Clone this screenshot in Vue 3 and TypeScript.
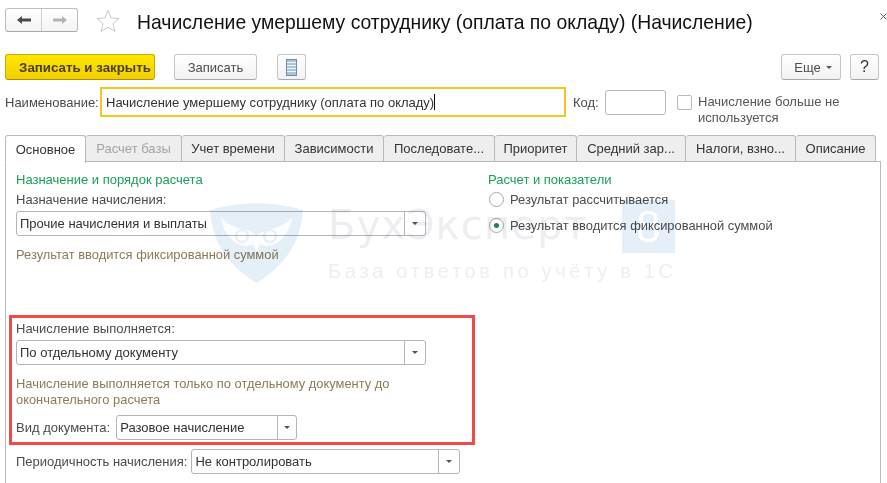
<script setup lang="ts">
const tabs: { label: string; width: number; state?: string }[] = [
  { label: 'Основное', width: 81, state: 'active' },
  { label: 'Расчет базы', width: 96, state: 'disabled' },
  { label: 'Учет времени', width: 103 },
  { label: 'Зависимости', width: 99 },
  { label: 'Последовате...', width: 111 },
  { label: 'Приоритет', width: 82 },
  { label: 'Средний зар...', width: 109 },
  { label: 'Налоги, взно...', width: 110 },
  { label: 'Описание', width: 80 }
]
</script>

<template>
  <div class="page">
    <header class="head">
      <div class="nav">
        <button class="nav-btn">
          <svg width="16" height="12" viewBox="0 0 16 12"><path d="M1 6l5-4v2.600h9v2.800H6V10z" fill="#4a4a4a" /></svg>
        </button>
        <button class="nav-btn">
          <svg width="16" height="12" viewBox="0 0 16 12"><path d="M15 6l-5-4v2.600H1v2.800h9V10z" fill="#b4b4b4" /></svg>
        </button>
      </div>
      <svg class="star" width="24" height="23" viewBox="0 0 24 23"><path d="M12 1.500l3.100 7.400 8 .6-6.100 5.200 1.900 7.800L12 18.300l-6.900 4.200L7 14.700.9 9.500l8-.6z" fill="#fff" stroke="#c9c9c9" /></svg>
      <h1 class="title">Начисление умершему сотруднику (оплата по окладу) (Начисление)</h1>
      <svg class="close" width="7" height="7" viewBox="0 0 7 7"><path d="M.5.5l6 6M6.500.5l-6 6" stroke="#666" stroke-width="1" /></svg>
    </header>

    <div class="toolbar">
      <button class="btn primary">Записать и закрыть</button>
      <button class="btn save">Записать</button>
      <button class="btn icon-btn">
        <svg width="11" height="17" viewBox="0 0 11 17">
          <rect x=".5" y=".5" width="10" height="16" fill="#a9c3da" stroke="#6f8da6" />
          <path d="M1 3.500h9M1 6.500h9M1 9.500h9M1 12.500h9" stroke="#eef4f9" stroke-width="1" />
        </svg>
      </button>
      <div class="spacer"></div>
      <button class="btn more">Еще <i class="caret"></i></button>
      <button class="btn help">?</button>
    </div>

    <div class="name-row">
      <label class="lbl name-lbl">Наименование:</label>
      <div class="name-input">Начисление умершему сотруднику (оплата по окладу)<i class="cursor"></i></div>
      <label class="lbl code-lbl">Код:</label>
      <div class="code-input"></div>
      <span class="check"></span>
      <span class="check-text">Начисление больше не используется</span>
    </div>

    <nav class="tabs">
      <div
        v-for="t in tabs"
        :key="t.label"
        class="tab"
        :class="t.state"
        :style="{ width: t.width + 'px' }"
      >{{ t.label }}</div>
    </nav>

    <section class="pane">
      <div class="top-cols">
        <div class="left">
          <div class="group-title">Назначение и порядок расчета</div>
          <div class="lbl field-lbl">Назначение начисления:</div>
          <div class="select wide"><span class="val">Прочие начисления и выплаты</span><span class="arrow"><i class="caret"></i></span></div>
          <div class="hint first-hint">Результат вводится фиксированной суммой</div>
        </div>
        <div class="right">
          <div class="group-title">Расчет и показатели</div>
          <div class="radio-row first-radio"><span class="radio"></span>Результат рассчитывается</div>
          <div class="radio-row"><span class="radio on"></span>Результат вводится фиксированной суммой</div>
        </div>
      </div>

      <div class="highlight">
        <div class="lbl field-lbl">Начисление выполняется:</div>
        <div class="select wide"><span class="val">По отдельному документу</span><span class="arrow"><i class="caret"></i></span></div>
        <div class="hint second-hint">Начисление выполняется только по отдельному документу до окончательного расчета</div>
        <div class="inline-field">
          <span class="lbl">Вид документа:</span>
          <div class="select doc"><span class="val">Разовое начисление</span><span class="arrow"><i class="caret"></i></span></div>
        </div>
      </div>

      <div class="inline-field period">
        <span class="lbl">Периодичность начисления:</span>
        <div class="select per"><span class="val">Не контролировать</span><span class="arrow"><i class="caret"></i></span></div>
      </div>
    </section>

    <div class="watermark" aria-hidden="true">
      <svg class="wm-shield" width="93" height="80" viewBox="0 0 93 80">
        <path d="M0 7C30-2 63-2 93 7 91 38 76 62 46.500 80 17 62 2 38 0 7z" fill="#e4eff8" />
        <path d="M11 14c6 8 15 11 25 13 4 1 8 3 10.500 6 2.500-3 6.500-5 10.500-6 10-2 19-5 25-13-1 12-8 22-17 27-6 3-12 2-15 0l-3.500 8-3.500-8c-3 2-9 3-15 0C19 36 12 26 11 14z" fill="#fbfdfe" />
        <circle cx="32" cy="33" r="6" fill="none" stroke="#e4eff8" stroke-width="2" />
        <circle cx="60" cy="33" r="6" fill="none" stroke="#e4eff8" stroke-width="2" />
      </svg>
      <div class="wm-text">
        <div class="wm-top"><span class="wm-name">БухЭксперт</span><span class="wm-eight">8</span></div>
        <div class="wm-sub">База ответов по учёту в 1С</div>
      </div>
    </div>
  </div>
</template>

<style>
html, body { margin: 0; background: #fff; }
</style>

<style scoped>
.page {
  position: relative;
  width: 887px;
  height: 483px;
  overflow: hidden;
  background: #fff;
  font-family: "Liberation Sans", Arial, sans-serif;
  font-size: 12px;
  color: #333;
  box-sizing: border-box;
  padding: 8px 6px 0 5px;
}
button { font-family: inherit; padding: 0; margin: 0; }
.head { display: flex; align-items: center; height: 24px; position: relative; }
.nav {
  display: flex; width: 73px; height: 24px; box-sizing: border-box;
  border: 1px solid #bdbdbd; border-bottom-color: #a8a8a8; border-radius: 3px;
  background: linear-gradient(#fff, #f3f3f3);
}
.nav-btn { flex: 1; border: 0; background: none; display: flex; align-items: center; justify-content: center; }
.nav-btn + .nav-btn { border-left: 1px solid #d0d0d0; }
.star { margin-left: 18px; margin-top: 1px; }
.title { margin: 3px 0 0 17px; font-size: 19.35px; font-weight: 400; color: #111; white-space: nowrap; line-height: 24px; }
.close { position: absolute; left: 875px; top: 5px; }

.toolbar { display: flex; align-items: stretch; height: 26px; margin-top: 22px; padding-right: 2px; }
.spacer { flex: 1; }
.btn {
  box-sizing: border-box; height: 26px;
  border: 1px solid #c6c6c6; border-bottom-color: #a9a9a9; border-radius: 3px;
  background: linear-gradient(#fff, #f2f2f2);
  color: #4d4d4d; font-size: 13px;
  display: flex; align-items: center; justify-content: center;
}
.primary {
  width: 150px; padding-left: 10px; font-weight: 700; font-size: 13.3px; color: #4a4020;
  background: linear-gradient(#ffe600, #f2cf00);
  border-color: #c9a900; border-bottom-color: #ab9000;
}
.save { width: 83px; margin-left: 19px; }
.icon-btn { width: 29px; margin-left: 20px; }
.more { width: 60px; gap: 5px; padding-left: 4px; }
.help { width: 29px; margin-left: 9px; color: #333; font-size: 16px; }
.caret { display: inline-block; width: 0; height: 0; border: 3px solid transparent; border-top: 3px solid #555; border-bottom: 0; }

.name-row { display: flex; align-items: center; height: 30px; margin-top: 7px; position: relative; }
.lbl { color: #4b4b4b; font-size: 13px; white-space: nowrap; }
.name-lbl { width: 95px; flex: none; }
.name-input {
  box-sizing: border-box; width: 466px; height: 30px;
  border: 2px solid #f6c51d; padding-left: 4px;
  display: flex; align-items: center;
  font-size: 13px; color: #333;
}
.cursor { display: inline-block; width: 1px; height: 16px; background: #111; }
.code-lbl { margin-left: 7px; width: 32px; }
.code-input { box-sizing: border-box; width: 61px; height: 25px; border: 1px solid #b8b8b8; border-radius: 3px; }
.check { box-sizing: border-box; width: 15px; height: 15px; border: 1px solid #b8b8b8; border-radius: 2px; margin-left: 11px; }
.check-text { width: 170px; margin: 8px 0 -8px 6px; font-size: 13px; line-height: 16px; color: #555; height: 32px; }

.tabs { display: flex; margin-top: 18px; height: 27px; position: relative; z-index: 1; }
.tab {
  box-sizing: border-box; height: 27px; flex: none;
  border: 1px solid #b9b9b9; border-left: 0; border-bottom: 1px solid #b9b9b9;
  border-radius: 3px 3px 0 0;
  background: #eeeeee; color: #333; font-size: 13px;
  display: flex; align-items: center; justify-content: center; white-space: nowrap;
}
.tab.active { background: #fff; border-left: 1px solid #b9b9b9; border-bottom-color: #fff; height: 28px; }
.tab.disabled { color: #a3a3a3; }

.pane {
  box-sizing: border-box; width: 876px; height: 330px;
  margin-top: -1px; padding: 10px 0 0 10px;
  border: 1px solid #b9b9b9; border-bottom: 0;
}
.top-cols { display: flex; height: 135px; }
.left { width: 472px; flex: none; }
.group-title { color: #17a05a; font-size: 13px; line-height: 15px; }
.field-lbl { line-height: 15px; margin-top: 5px; }
.select {
  box-sizing: border-box; height: 25px; display: flex; align-items: center;
  border: 1px solid #b5b5b5; border-radius: 3px; background: #fff;
  font-size: 13px; color: #333;
}
.select .val { flex: 1; padding-left: 3px; white-space: nowrap; }
.arrow { box-sizing: border-box; width: 21px; height: 100%; flex: none; border-left: 1px solid #b5b5b5; display: flex; align-items: center; justify-content: center; }
.wide { width: 410px; margin-top: 4px; }
.hint { color: #8b7b57; font-size: 12.9px; line-height: 16px; }
.first-hint { margin-top: 11px; }
.second-hint { margin-top: 11px; width: 400px; }
.right { flex: 1; }
.radio-row { display: flex; align-items: center; font-size: 12.9px; color: #4b4b4b; height: 17px; gap: 6px; margin-top: 9px; margin-left: 1px; }
.first-radio { margin-top: 4px; }
.radio { box-sizing: border-box; width: 15px; height: 15px; border: 1px solid #aaa; border-radius: 50%; display: flex; align-items: center; justify-content: center; }
.radio.on::after { content: ""; width: 5px; height: 5px; border-radius: 50%; background: #17845a; }

.highlight {
  box-sizing: border-box; width: 466px; height: 130px;
  margin: 8px 0 0 -7px; padding: 3px 0 0 4px;
  border: 3px solid #ef4a45;
}
.highlight .field-lbl { margin-top: 0; }
.inline-field { display: flex; align-items: center; gap: 4px; }
.highlight .inline-field { margin-top: 7px; gap: 6px; }
.doc { width: 181px; }
.doc .arrow { width: 19px; }
.period { margin-top: 4px; }
.per { width: 269px; }

.watermark { position: absolute; left: 210px; top: 200px; display: flex; gap: 25px; pointer-events: none; mix-blend-mode: multiply; }
.wm-shield { margin-top: 3px; }
.wm-top { display: flex; align-items: flex-start; }
.wm-name { font-family: "DejaVu Sans", sans-serif; font-size: 40px; line-height: 50px; color: #eeeef2; width: 294px; letter-spacing: 1.2px; }
.wm-eight { width: 53px; height: 53px; background: #e4eff8; color: #fff; font-size: 44px; line-height: 53px; text-align: center; }
.wm-sub { font-size: 20px; letter-spacing: 3.7px; color: #eeeef0; line-height: 20px; margin-top: 8px; white-space: nowrap; }
</style>
